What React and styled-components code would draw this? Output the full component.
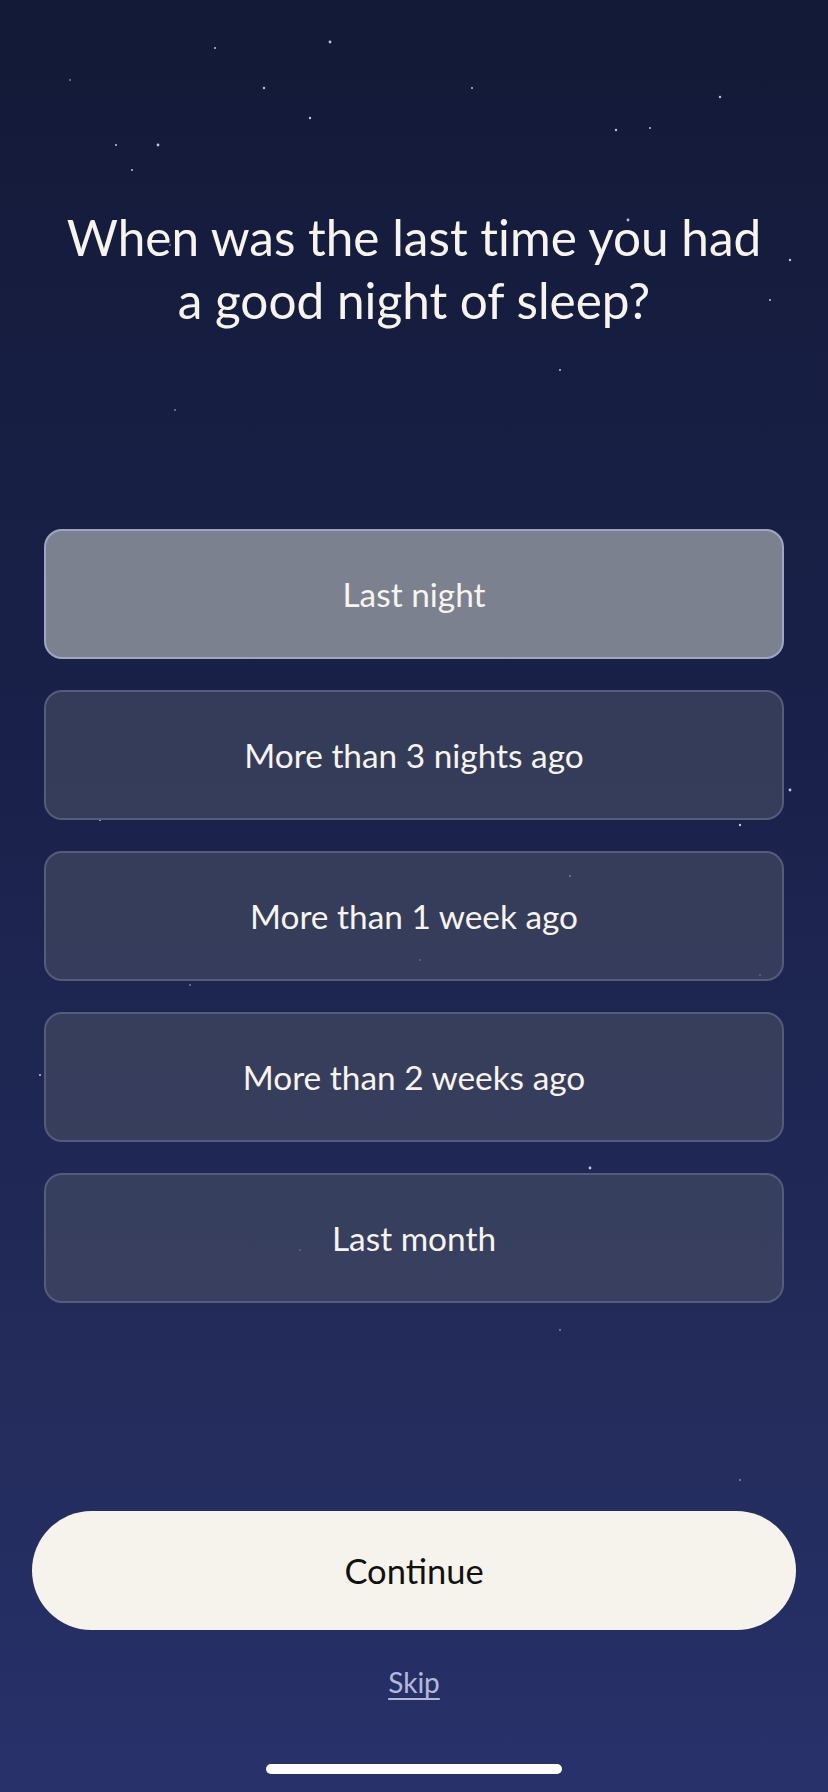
import React, { useState } from 'react'
import styled, { createGlobalStyle } from 'styled-components'

const GlobalStyle = createGlobalStyle`
  html, body { margin: 0; padding: 0; background: #141a36; }
  * { box-sizing: border-box; }
`

const Page = styled.div`
  position: relative;
  width: 828px;
  height: 1792px;
  overflow: hidden;
  display: flex;
  flex-direction: column;
  align-items: center;
  background: linear-gradient(180deg, #131a37 0%, #19214a 40%, #222b59 75%, #28316a 100%);
  font-family: Lato, "Open Sans", sans-serif;
  font-variant-ligatures: none;
  color: #f7f4ee;
`

const Stars = styled.svg`
  position: absolute;
  inset: 0;
  pointer-events: none;
`

const Title = styled.h1`
  margin: 206px 0 0;
  font-size: 49.5px;
  line-height: 63px;
  font-weight: 400;
  text-align: center;
  position: relative;
`

const Options = styled.div`
  margin-top: 197px;
  width: 740px;
  display: flex;
  flex-direction: column;
  gap: 31px;
  position: relative;
`

const Option = styled.button`
  height: 130px;
  border-radius: 18px;
  border: 2px solid ${p => (p.$active ? '#a0a5c2' : '#555b7b')};
  background: ${p => (p.$active ? '#7c8190' : 'rgba(72, 78, 100, 0.6)')};
  color: #f7f4ee;
  font-family: inherit;
  font-variant-ligatures: none;
  font-size: 33.4px;
  cursor: pointer;
`

const Footer = styled.div`
  margin-top: auto;
  width: 100%;
  display: flex;
  flex-direction: column;
  align-items: center;
  position: relative;
`

const Continue = styled.button`
  width: 764px;
  height: 119px;
  border: none;
  border-radius: 60px;
  background: #f6f3ec;
  color: #111;
  font-family: inherit;
  font-size: 34.5px;
  cursor: pointer;
`

const Skip = styled.a`
  margin-top: 35px;
  font-size: 28px;
  color: #b5b9d8;
  text-decoration: underline;
  text-underline-offset: 5px;
  text-decoration-thickness: 2px;
`

const HomeBar = styled.div`
  margin: 65px 0 18px;
  width: 296px;
  height: 10px;
  border-radius: 5px;
  background: #ffffff;
`

const stars = [
  [330, 42, 1.4], [264, 88, 1.2], [310, 118, 1.2], [158, 145, 1.4], [616, 130, 1.2], [650, 128, 1], [628, 220, 1.4],
  [472, 88, 1], [116, 145, 1], [132, 170, 1], [70, 80, 0.8], [215, 48, 1], [720, 97, 1.2], [170, 245, 0.8],
  [790, 260, 1.2], [770, 300, 1], [560, 370, 1], [175, 410, 0.8], [140, 590, 1], [600, 608, 1],
  [790, 790, 1.4], [740, 825, 1.2], [100, 820, 1], [570, 876, 1], [420, 960, 0.8], [190, 985, 0.8],
  [40, 1075, 1], [590, 1168, 1.4], [760, 975, 0.8], [300, 1250, 0.8], [560, 1330, 0.8], [740, 1480, 0.8],
]

const answers = ['Last night', 'More than 3 nights ago', 'More than 1 week ago', 'More than 2 weeks ago', 'Last month']

const App = () => {
  const [selected, setSelected] = useState(0)

  return (
    <Page>
      <GlobalStyle />
      <Stars width="828" height="1792">
        {stars.map(([x, y, r], i) => (
          <circle key={i} cx={x} cy={y} r={r} fill="#ffffff" opacity={0.75} />
        ))}
      </Stars>
      <Title>
        When was the last time you had
        <br />
        a good night of sleep?
      </Title>
      <Options>
        {answers.map((a, i) => (
          <Option key={a} $active={selected === i} onClick={() => setSelected(i)}>
            {a}
          </Option>
        ))}
      </Options>
      <Footer>
        <Continue>Continue</Continue>
        <Skip href="#">Skip</Skip>
        <HomeBar />
      </Footer>
    </Page>
  )
}

export default App
